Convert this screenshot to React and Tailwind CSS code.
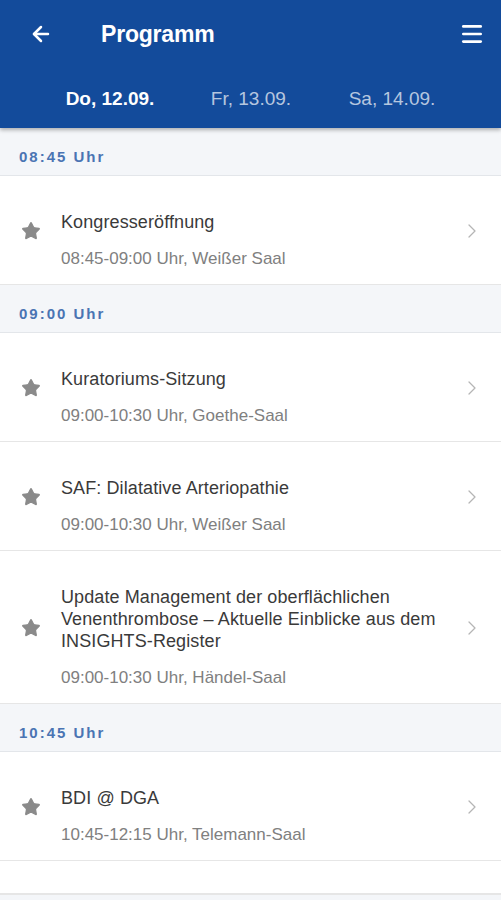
import React from 'react';
import { ArrowLeft, Menu, Star, ChevronRight } from 'lucide-react';

const days = ['Do, 12.09.', 'Fr, 13.09.', 'Sa, 14.09.'];

const program = [
  {
    time: '08:45 Uhr',
    items: [{ title: 'Kongresseröffnung', info: '08:45-09:00 Uhr, Weißer Saal' }],
  },
  {
    time: '09:00 Uhr',
    items: [
      { title: 'Kuratoriums-Sitzung', info: '09:00-10:30 Uhr, Goethe-Saal' },
      { title: 'SAF: Dilatative Arteriopathie', info: '09:00-10:30 Uhr, Weißer Saal' },
      {
        title: 'Update Management der oberflächlichen Venenthrombose – Aktuelle Einblicke aus dem INSIGHTS-Register',
        info: '09:00-10:30 Uhr, Händel-Saal',
      },
    ],
  },
  {
    time: '10:45 Uhr',
    items: [{ title: 'BDI @ DGA', info: '10:45-12:15 Uhr, Telemann-Saal' }],
  },
];

const Session = ({ session }) => (
  <div className='flex items-center bg-white border-b border-[#e6e6e6] pt-[35px] pb-[15px]'>
    <div className='w-[61px] flex justify-center shrink-0 pl-[1px] -mt-[18px]'>
      <Star size={20} className='fill-[#8a8a8a] text-[#8a8a8a]' strokeWidth={1.5} />
    </div>
    <div className='flex-1'>
      <p className='text-[18px] leading-[22px] text-[#3a3a3a] tracking-[0.1px]'>{session.title}</p>
      <p className='text-[17px] leading-[20px] text-[#808080] mt-[16px]'>{session.info}</p>
    </div>
    <div className='w-[58px] flex justify-center shrink-0 -mt-[18px]'>
      <ChevronRight size={24} className='text-[#b5b5b5]' strokeWidth={1.25} />
    </div>
  </div>
);

const App = () => {
  return (
    <div className='w-[501px] h-[900px] overflow-hidden bg-[#f4f6f9] font-["Liberation_Sans",Arial,sans-serif]'>
      <div className='bg-[#134b9b] text-white shadow-[0_2px_4px_rgba(0,0,0,0.3)] relative z-10'>
        <div className='flex items-center h-[68px]'>
          <div className='w-[80px] flex justify-center pl-[1px]'>
            <ArrowLeft size={24} strokeWidth={2.5} />
          </div>
          <h1 className='flex-1 ml-[21px] text-[23px] font-bold tracking-[-0.2px]'>Programm</h1>
          <div className='w-[58px] flex justify-center'>
            <Menu size={26} strokeWidth={2.5} />
          </div>
        </div>
        <div className='flex justify-center h-[60px] items-start pt-[17px] pl-[1px]'>
          {days.map((day, i) => (
            <div
              key={day}
              className={`w-[141px] text-center text-[19px] ${i === 0 ? 'font-bold text-white' : 'text-white/70'}`}
            >
              {day}
            </div>
          ))}
        </div>
      </div>

      {program.map((group) => (
        <div key={group.time}>
          <div className='h-[48px] flex items-center px-[19px] pt-[12px] border-b border-[#e3e6ea] text-[15px] font-bold tracking-[2px] text-[#4a74b3]'>
            {group.time}
          </div>
          {group.items.map((s) => (
            <Session key={s.title} session={s} />
          ))}
        </div>
      ))}
      <div className='h-[34px] bg-white border-b-2 border-[#e6e6e6]' />
    </div>
  );
};

export default App;
